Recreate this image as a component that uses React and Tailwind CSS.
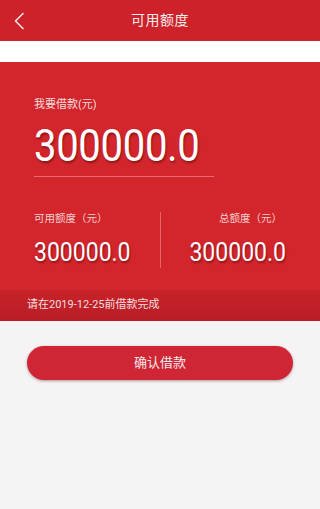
export default function App() {
    const font = { fontFamily: 'Roboto, "Noto Sans CJK SC", sans-serif' };

    return (
        <div className="w-full min-h-[509px] bg-[#f5f4f4]" style={font}>
            {/* header */}
            <div className="relative h-[41px] bg-[#cd2229] flex items-center justify-center">
                <svg className="absolute left-[13px] top-[12px]" width="12" height="18" viewBox="0 0 12 18" fill="none">
                    <path d="M10 1.5 L2.5 9 L10 16.5" stroke="#f3e6e6" strokeWidth="1.6" strokeLinecap="round" strokeLinejoin="round" />
                </svg>
                <span className="text-[14px] text-[#f6ecec] tracking-[0.5px]">可用额度</span>
            </div>
            <div className="h-[21px] bg-white" />

            {/* card */}
            <div className="bg-[#d3262c]">
                <div className="pt-[37px] pl-[34px]">
                    <div className="text-[11px] leading-none text-[#f4dede]">我要借款(元)</div>
                    <div className="mt-[14px] text-[40px] leading-none text-white font-normal tracking-[-0.3px] inline-block scale-y-[1.12] origin-top [text-shadow:1px_2px_2px_rgba(60,0,0,0.45)]">
                        300000.0
                    </div>
                    <div className="mt-[12px] w-[180px] h-px bg-[#e86a6e]" />
                </div>

                <div className="mt-[35px] flex">
                    <div className="flex-1 pl-[34px] pt-[2px]">
                        <div className="text-[10.5px] leading-none text-[#f1cfcf]">可用额度（元）</div>
                        <div className="mt-[14px] text-[23px] leading-none text-white inline-block scale-y-[1.15] origin-top [text-shadow:1px_2px_2px_rgba(60,0,0,0.45)]">
                            300000.0
                        </div>
                    </div>
                    <div className="w-px h-[56px] bg-[#e56468]" />
                    <div className="flex-1 flex flex-col items-end pr-[34px] pt-[2px]">
                        <div className="text-[10.5px] leading-none text-[#f1cfcf] pr-[4px]">总额度（元）</div>
                        <div className="mt-[14px] text-[23px] leading-none text-white inline-block scale-y-[1.15] origin-top [text-shadow:1px_2px_2px_rgba(60,0,0,0.45)]">
                            300000.0
                        </div>
                    </div>
                </div>

                <div className="mt-[22px] h-[31px] bg-gradient-to-b from-[#c8222a] to-[#b81e26] flex items-center pl-[27px]">
                    <span className="text-[11px] text-[#f3dede]">请在2019-12-25前借款完成</span>
                </div>
            </div>

            {/* button */}
            <div className="px-[27px] pt-[25px]">
                <button className="w-full h-[34px] rounded-full bg-[#cf2636] text-[13px] text-[#f6e8ea] shadow-[0_1px_3px_rgba(80,0,0,0.4)]">
                    确认借款
                </button>
            </div>
        </div>
    );
}
